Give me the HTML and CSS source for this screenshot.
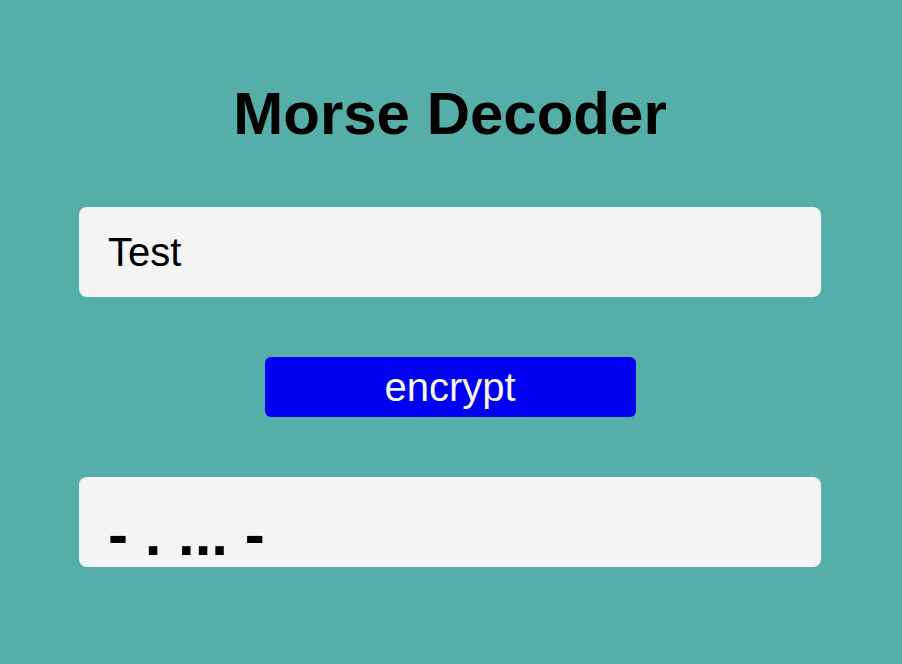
FILE: index.html
```html
<!DOCTYPE html>
<html lang="en">
<head>
<meta charset="utf-8">
<title>Morse Decoder</title>
<link rel="stylesheet" href="styles.css">
</head>
<body>
<main class="app">
  <h1 class="title">Morse Decoder</h1>
  <input class="field" type="text" value="Test">
  <button class="btn" type="button">encrypt</button>
  <div class="output">- . ... -</div>
</main>
</body>
</html>
```
FILE: styles.css
```css
html, body {
  margin: 0;
  padding: 0;
}
body {
  background: #55afa8;
  font-family: "Liberation Sans", Arial, Helvetica, sans-serif;
  height: 664px;
  overflow: hidden;
}
.app {
  display: flex;
  flex-direction: column;
  align-items: center;
  padding: 79px 2px 0 0;
}
.title {
  margin: 0;
  font-size: 60px;
  font-weight: bold;
  line-height: 69px;
  color: #000;
}
.field {
  box-sizing: border-box;
  width: 742px;
  height: 90px;
  margin-top: 59px;
  padding: 0 29px;
  border: none;
  border-radius: 8px;
  background: #f4f4f4;
  font-family: inherit;
  font-size: 40px;
  color: #000;
  outline: none;
}
.btn {
  box-sizing: border-box;
  width: 371px;
  height: 60px;
  margin-top: 60px;
  border: none;
  border-radius: 6px;
  background: #0000f0;
  color: #f5f5e6;
  font-family: inherit;
  font-size: 40px;
  padding: 0;
}
.output {
  box-sizing: border-box;
  width: 742px;
  height: 90px;
  margin-top: 60px;
  padding: 24px 29px 0;
  border-radius: 8px;
  background: #f4f4f4;
  font-size: 60px;
  font-weight: bold;
  line-height: 67px;
  color: #000;
  overflow: hidden;
  white-space: pre;
}
```
